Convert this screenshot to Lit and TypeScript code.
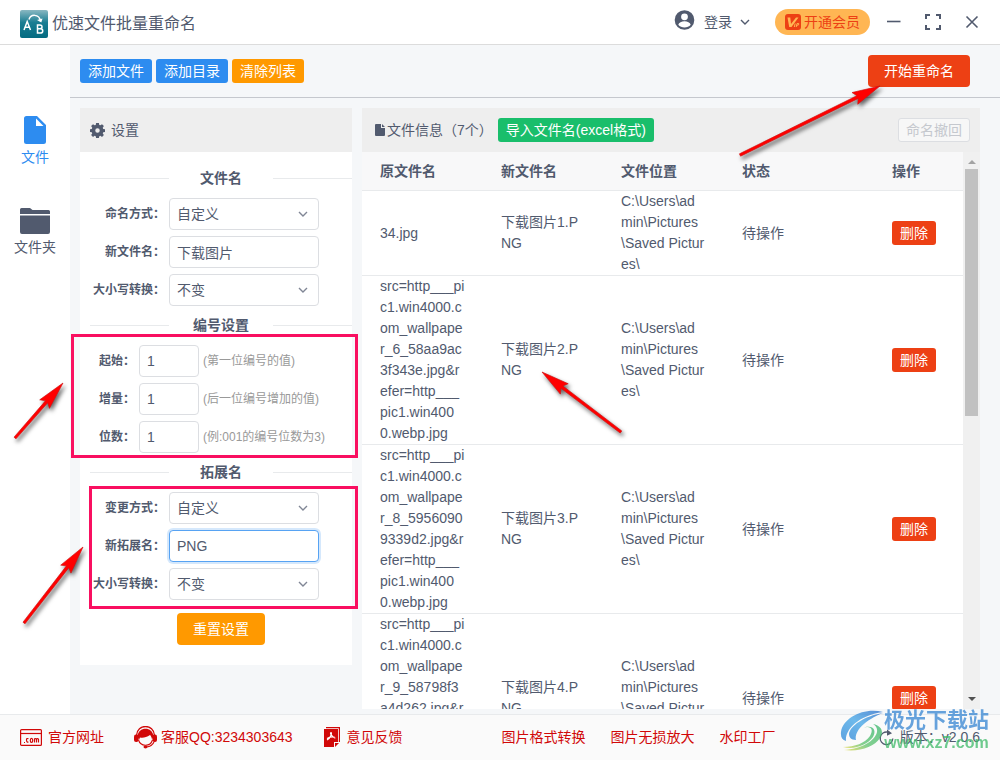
import { LitElement, html, css, svg } from "lit";
import { customElement, state } from "lit/decorators.js";

interface FileRow {
  source: string;
  target: string;
  folder: string;
  status: string;
}

const FOLDER = "C:\\Users\\admin\\Pictures\\Saved Pictures\\";

const chevron = html`<svg class="chevron" width="10" height="6" viewBox="0 0 10 6" aria-hidden="true">
  <path d="M1 1l4 4 4-4" fill="none" stroke="currentColor" stroke-width="1.4" />
</svg>`;

@customElement("app-root")
export class AppRoot extends LitElement {
  @state() private rows: FileRow[] = [
    { source: "34.jpg", target: "下载图片1.PNG", folder: FOLDER, status: "待操作" },
    {
      source: "src=http___pic1.win4000.com_wallpaper_6_58aa9ac3f343e.jpg&refer=http___pic1.win4000.webp.jpg",
      target: "下载图片2.PNG", folder: FOLDER, status: "待操作",
    },
    {
      source: "src=http___pic1.win4000.com_wallpaper_8_59560909339d2.jpg&refer=http___pic1.win4000.webp.jpg",
      target: "下载图片3.PNG", folder: FOLDER, status: "待操作",
    },
    {
      source: "src=http___pic1.win4000.com_wallpaper_9_58798f3a4d262.jpg&refer=http___pic1.win4000.webp.jpg",
      target: "下载图片4.PNG", folder: FOLDER, status: "待操作",
    },
  ];

  static styles = css`
    :host {
      display: flex;
      flex-direction: column;
      position: relative;
      height: 100vh;
      overflow: hidden;
      font: 14px/21px "Liberation Sans", "Noto Sans CJK SC", sans-serif;
      color: #515a6e;
      background: #f5f7f9;
    }
    * { box-sizing: border-box; }
    svg { display: block; flex: none; }
    button, input, select { font: inherit; color: inherit; margin: 0; }
    button { border: 0; padding: 0; background: none; white-space: nowrap; cursor: pointer; }
    a { color: inherit; text-decoration: none; }

    .titlebar {
      display: flex;
      align-items: center;
      flex: none;
      height: 45px;
      padding: 0 21px 0 20px;
      background: #fff;
      border-bottom: 1px solid #dcdcdc;
    }
    .brand { display: flex; align-items: center; gap: 4px; margin: 0 auto 0 0; padding-top: 3px; font-size: 16px; font-weight: 400; }
    .login { display: flex; align-items: center; gap: 8px; margin-right: 25px; }
    .login svg:first-child { margin-bottom: 4px; }
    .vip {
      display: flex;
      align-items: center;
      gap: 3px;
      height: 26px;
      margin-right: 17px;
      padding: 0 10px;
      border-radius: 13px;
      background: #ffb653;
      color: #ed4014;
    }
    .window { display: flex; align-items: center; gap: 24px; }

    .body { display: flex; flex: 1; min-height: 0; }
    .sidebar {
      display: flex;
      flex-direction: column;
      align-items: center;
      flex: none;
      gap: 40px;
      width: 70px;
      padding-top: 71px;
      background: #fff;
    }
    .nav { display: flex; flex-direction: column; align-items: center; gap: 3px; }
    .nav.active { color: #2d8cf0; }

    .main { display: flex; flex-direction: column; flex: 1; min-width: 0; }
    .toolbar {
      display: flex;
      align-items: center;
      flex: none;
      gap: 4px;
      height: 53px;
      padding: 0 30px 0 10px;
      border-bottom: 1px solid #c5c8ce;
    }
    .btn { height: 24px; padding: 0 8px; border-radius: 3px; color: #fff; line-height: 22px; }
    .large { height: 32px; padding: 0 16px; border-radius: 4px; }
    .blue { background: #2d8cf0; }
    .orange { background: #ff9900; }
    .red { background: #ed4014; }
    .green { background: #19be6b; }
    .end { margin-left: auto; }
    .undo { border: 1px solid #dcdee2; padding: 0 7px; background: #f7f7f7; color: #c5c8ce; line-height: 20px; }

    .content { display: flex; align-items: flex-start; flex: 1; gap: 10px; min-height: 0; padding: 10px 20px 5px 10px; }
    .panel { background: #fff; }
    .panel-head { display: flex; align-items: center; height: 44px; padding: 0 10px; background: #eee; }
    .panel-head h2 { margin: 0; font-size: 14px; font-weight: 400; }

    .settings { flex: none; width: 272px; }
    .settings .panel-head { gap: 6px; }
    .form { display: flex; flex-direction: column; gap: 6px; padding: 13px 0 0 10px; }
    .divider { display: flex; align-items: center; height: 27px; margin: 0; font-size: 14px; font-weight: 700; }
    .divider::before, .divider::after { content: ""; flex: 1; height: 1px; background: #e8eaec; }
    .divider span { width: 104px; text-align: center; }
    .field { display: flex; align-items: center; gap: 4px; height: 32px; }
    .field label { flex: none; width: 75px; text-align: right; font-size: 12px; font-weight: 700; white-space: nowrap; }
    .field.short label { width: 45px; }
    .control { position: relative; width: 150px; height: 32px; }
    .short .control { width: 60px; }
    .control input, .control select {
      display: block;
      width: 100%;
      height: 32px;
      padding: 0 7px;
      border: 1px solid #dcdee2;
      border-radius: 4px;
      background: #fff;
      outline: none;
      appearance: none;
    }
    .control .chevron { position: absolute; right: 11px; top: 13px; color: #808695; pointer-events: none; }
    .control .focused { border-color: #57a3f3; box-shadow: 0 0 0 2px rgba(45, 140, 240, 0.2); }
    .hint { font-size: 12px; color: #999; white-space: nowrap; }
    .reset { display: flex; justify-content: center; padding: 13px 0 20px 10px; }

    .list { display: flex; flex-direction: column; flex: 1; align-self: stretch; min-width: 0; }
    .list .panel-head { flex: none; gap: 2px; padding-left: 13px; }
    .list .green { margin-left: 3px; }
    .scroll { display: flex; flex: 1; min-height: 0; }
    .viewport { flex: 1; min-width: 0; overflow: hidden; }
    table { width: 100%; table-layout: fixed; border-spacing: 0; }
    th, td { padding: 0 18px; border-bottom: 1px solid #e8eaec; text-align: left; vertical-align: middle; word-break: break-all; }
    th { height: 39px; background: #f8f8f9; font-weight: 700; }
    td .btn { display: block; }
    .c1, .c3 { width: 121px; }
    .c2 { width: 120px; }
    .c4 { width: 150px; }
    .c5 { width: 89px; }
    .track { display: flex; flex-direction: column; align-items: center; flex: none; width: 17px; padding: 7px 0; background: #f0f0f0; }
    .thumb { width: 13px; height: 247px; margin: 5px 0 auto; background: #c1c1c1; }

    .footer {
      display: flex;
      align-items: center;
      flex: none;
      gap: 99px;
      height: 46px;
      padding: 0 20px;
      border-top: 1px solid #e8eaec;
      background: #fafafa;
      color: #d10808;
      white-space: nowrap;
    }
    .links { display: flex; gap: 25px; }
    .links.contact { gap: 30px; }
    .links a { display: flex; align-items: center; gap: 6px; }
    .links .service { gap: 4px; }
    .version { display: flex; align-items: center; gap: 6px; margin-left: auto; color: #515a6e; }

    .marks { position: absolute; inset: 0; width: 100%; height: 100%; pointer-events: none; }
    .watermark { position: absolute; right: 11px; bottom: 6px; display: flex; align-items: center; opacity: 0.75; pointer-events: none; }
    .watermark-text { display: flex; flex-direction: column; align-items: center; font-weight: 700; white-space: nowrap; }
    .site-name { font-size: 21px; line-height: 24px; color: #3585d2; }
    .site-url { font-size: 16px; line-height: 22px; color: #3fba69; }
  `;

  private selectField(id: string, label: string, value: string) {
    return html`<div class="field">
      <label for=${id}>${label}</label>
      <div class="control">
        <select id=${id}><option>${value}</option></select>
        ${chevron}
      </div>
    </div>`;
  }

  private textField(id: string, label: string, value: string, focused = false) {
    return html`<div class="field">
      <label for=${id}>${label}</label>
      <div class="control"><input id=${id} class=${focused ? "focused" : ""} .value=${value} /></div>
    </div>`;
  }

  private numberField(id: string, label: string, hint: string) {
    return html`<div class="field short">
      <label for=${id}>${label}</label>
      <div class="control"><input id=${id} .value=${"1"} /></div>
      <span class="hint">${hint}</span>
    </div>`;
  }

  private arrow(tailX: number, tailY: number, tipX: number, tipY: number) {
    const length = Math.hypot(tipX - tailX, tipY - tailY);
    const angle = (Math.atan2(tipY - tailY, tipX - tailX) * 180) / Math.PI;
    const d = `M0 0L-28 -6.5L-25 -1.5L${-length} -1.3V1.3L-25 1.5L-28 6.5Z`;
    return svg`<g filter="url(#soft)"><path transform="translate(${tipX} ${tipY}) rotate(${angle})" d=${d}
      fill="#ff0000" stroke="#d01010" stroke-width="0.6" stroke-linejoin="round" /></g>`;
  }

  render() {
    return html`
      <header class="titlebar">
        <h1 class="brand">
          <svg width="28" height="28" viewBox="0 0 28 28" aria-hidden="true">
            <defs><linearGradient id="logo" x1="0" y1="0" x2="0" y2="1">
              <stop offset="0" stop-color="#8ab8c2" /><stop offset=".45" stop-color="#197d92" /><stop offset="1" stop-color="#046b81" />
            </linearGradient></defs>
            <rect width="28" height="28" rx="2" fill="url(#logo)" />
            <g fill="none" stroke="#fff" stroke-width="1.5">
              <path d="M4 20l3.2-8.5L10.500 20M5 17.300h4.400" />
              <path d="M17.500 15v8h2.700c3.400 0 3.400-4.200 0-4.200h-2.700 2.400c2.800 0 2.800-3.800 0-3.800z" />
              <path d="M9 9.500c1.500-5.500 10-6 11.500 1.500" />
            </g>
            <path d="M17 10l5.500-1.500-1.200 4z" fill="#fff" />
          </svg>
          优速文件批量重命名
        </h1>
        <button class="login">
          <svg width="22" height="20" viewBox="0 0 22 20" aria-hidden="true">
            <circle cx="10.500" cy="10" r="9.800" fill="#515a6e" />
            <circle cx="10.500" cy="6.800" r="3.400" fill="#fff" />
            <path d="M4.300 14.800c1-4.700 11.400-4.700 12.400 0-2.800 3.600-9.600 3.600-12.400 0z" fill="#fff" />
          </svg>
          登录${chevron}
        </button>
        <button class="vip">
          <svg width="16" height="16" viewBox="0 0 16 16" aria-hidden="true">
            <rect width="16" height="16" rx="3" fill="#ed4014" />
            <path d="M2.500 3.500h2.800L6 10l5-6.500h2.500L6.500 13H4.200z" fill="#ffb653" />
            <path d="M9.300 13l.9-3.500M11.200 13l.9-3.500h1.600q.8 1.800-2 1.800" fill="none" stroke="#ffb653" />
          </svg>
          开通会员
        </button>
        <div class="window">
          <button aria-label="最小化"><svg width="14" height="14" viewBox="0 0 14 14"><path d="M0 6.500h13.500" stroke="#515a6e" stroke-width="1.600" /></svg></button>
          <button aria-label="最大化"><svg width="16" height="16" viewBox="0 0 16 16"><path d="M1 5V1h4M11 1h4v4M15 11v4h-4M5 15H1v-4" fill="none" stroke="#515a6e" stroke-width="2" /></svg></button>
          <button aria-label="关闭"><svg width="14" height="14" viewBox="0 0 14 14"><path d="M1.500 1.500l11 11M12.500 1.500l-11 11" stroke="#515a6e" stroke-width="1.600" /></svg></button>
        </div>
      </header>

      <div class="body">
        <nav class="sidebar">
          <button class="nav active">
            <svg width="22" height="28" viewBox="0 0 22 28" aria-hidden="true">
              <path d="M2.500 0H13l9 9v16.500a2.500 2.500 0 0 1-2.500 2.500h-17A2.500 2.500 0 0 1 0 25.500v-23A2.500 2.500 0 0 1 2.500 0z" fill="#2d8cf0" />
              <path d="M12 2.500V10h7.500z" fill="#fff" />
            </svg>
            文件
          </button>
          <button class="nav">
            <svg width="30" height="26" viewBox="0 0 30 26" aria-hidden="true" fill="#515a6e">
              <path d="M0 6V1.500Q0 0 1.500 0H10l2.500 2H28.500Q30 2 30 3.500V6zM0 7.500h30V24a2 2 0 0 1-2 2H2a2 2 0 0 1-2-2z" />
            </svg>
            文件夹
          </button>
        </nav>

        <main class="main">
          <div class="toolbar">
            <button class="btn blue">添加文件</button>
            <button class="btn blue">添加目录</button>
            <button class="btn orange">清除列表</button>
            <button class="btn large red end">开始重命名</button>
          </div>

          <div class="content">
            <section class="panel settings">
              <div class="panel-head">
                <svg width="15" height="15" viewBox="0 0 16 16" aria-hidden="true">
                  <path fill="#515a6e" fill-rule="evenodd" d="M6.500 0h3l.4 2 1.200.5L12.800 1.300l2 2-1.200 1.800.5 1.200 1.900.3v2.900l-1.900.4-.5 1.200 1.200 1.700-2 2-1.700-1.100-1.200.5-.4 1.800h-3l-.4-1.800-1.200-.5-1.700 1.100-2-2 1.200-1.700-.5-1.200L0 9.500V6.600l1.900-.3.500-1.200L1.200 3.300l2-2 1.700 1.200L6.100 2zM8 5.600a2.400 2.400 0 1 0 0 4.800 2.400 2.400 0 0 0 0-4.800z" />
                </svg>
                <h2>设置</h2>
              </div>
              <div class="form">
                <h3 class="divider"><span>文件名</span></h3>
                ${this.selectField("name-mode", "命名方式：", "自定义")}
                ${this.textField("new-name", "新文件名：", "下载图片")}
                ${this.selectField("name-case", "大小写转换：", "不变")}
                <h3 class="divider"><span>编号设置</span></h3>
                ${this.numberField("start", "起始：", "(第一位编号的值)")}
                ${this.numberField("step", "增量：", "(后一位编号增加的值)")}
                ${this.numberField("digits", "位数：", "(例:001的编号位数为3)")}
                <h3 class="divider"><span>拓展名</span></h3>
                ${this.selectField("ext-mode", "变更方式：", "自定义")}
                ${this.textField("new-ext", "新拓展名：", "PNG", true)}
                ${this.selectField("ext-case", "大小写转换：", "不变")}
              </div>
              <div class="reset"><button class="btn large orange">重置设置</button></div>
            </section>

            <section class="list">
              <div class="panel-head">
                <svg width="10" height="12" viewBox="0 0 10 12" aria-hidden="true">
                  <path d="M1 0h5v4h4v7a1 1 0 0 1-1 1H1a1 1 0 0 1-1-1V1a1 1 0 0 1 1-1zM7 0l3 3H7z" fill="#515a6e" />
                </svg>
                <h2>文件信息（7个）</h2>
                <button class="btn green">导入文件名(excel格式)</button>
                <button class="btn undo end" disabled>命名撤回</button>
              </div>
              <div class="scroll panel">
                <div class="viewport">
                  <table>
                    <thead>
                      <tr>
                        <th class="c1">原文件名</th>
                        <th class="c2">新文件名</th>
                        <th class="c3">文件位置</th>
                        <th class="c4">状态</th>
                        <th class="c5">操作</th>
                      </tr>
                    </thead>
                    <tbody>
                      ${this.rows.map((row) => html`<tr>
                        <td>${row.source}</td>
                        <td>${row.target}</td>
                        <td>${row.folder}</td>
                        <td>${row.status}</td>
                        <td><button class="btn red">删除</button></td>
                      </tr>`)}
                    </tbody>
                  </table>
                </div>
                <div class="track">
                  <svg width="8" height="5" viewBox="0 0 8 5"><path d="M0 5l4-4 4 4z" fill="#a3a3a3" /></svg>
                  <div class="thumb"></div>
                  <svg width="8" height="5" viewBox="0 0 8 5"><path d="M0 0l4 4 4-4z" fill="#505050" /></svg>
                </div>
              </div>
            </section>
          </div>
        </main>
      </div>

      <footer class="footer">
        <div class="links contact">
          <a href="#site">
            <svg width="22" height="17" viewBox="0 0 22 17" aria-hidden="true" fill="none" stroke="#d10808" stroke-width="1.200">
              <rect x=".6" y=".6" width="20.800" height="15.800" rx="1" />
              <path d="M1 4.500h20" />
              <path d="M4 13.500h1M8.500 9.800q-2-1-2 1.300t2 1.900M10.300 11.400q0-2 1.200-2t1.200 2-1.200 2-1.200-2M14.500 13.500V9.300M14.500 10.500q1.300-2 2 0v3M16.500 10.500q1.300-2 2 0v3" />
            </svg>
            官方网址
          </a>
          <a class="service" href="#service">
            <svg width="23" height="23" viewBox="0 0 23 23" aria-hidden="true">
              <path d="M2.500 9.500C3-2.500 20-2.500 20.500 9.500" fill="none" stroke="#d10808" stroke-width="1.300" />
              <path d="M3.500 10.500C4 0 19 0 19.500 10.500l-1.500 3c-.3-2-1-3.500-2-4.500-3.500 2.500-7 3-10 2.500L5 14z" fill="#d10808" />
              <rect y="8.500" width="4.500" height="7.500" rx="2" fill="#d10808" />
              <rect x="18.500" y="8.500" width="4.500" height="7.500" rx="2" fill="#d10808" />
              <path d="M4.500 14c2 6.500 11.500 7.500 14 0M20 16q-2 4.500-7.500 5" fill="none" stroke="#d10808" stroke-width="1.100" />
              <ellipse cx="11.500" cy="21" rx="2" ry="1.400" fill="#d10808" />
            </svg>
            客服QQ:3234303643
          </a>
          <a href="#feedback">
            <svg width="18" height="21" viewBox="0 0 18 21" aria-hidden="true">
              <path d="M3 .6h13.400V15" fill="none" stroke="#d10808" stroke-width="1.200" />
              <path d="M1 2h14v13h-4v5H1zM12 16h4l-4 4z" fill="#d10808" />
              <path d="M8 5.500c-1.500 0 .7 4.500 4.300 5.800M8 5.500c1.300 0-.5 6-4 7.500M4 11.500c2-1.300 5-1.700 7.500-1.500" fill="none" stroke="#fff" stroke-width="1.200" />
            </svg>
            意见反馈
          </a>
        </div>
        <div class="links">
          <a href="#convert">图片格式转换</a>
          <a href="#enlarge">图片无损放大</a>
          <a href="#watermark">水印工厂</a>
        </div>
        <div class="version">
          <svg width="15" height="17" viewBox="0 0 15 17" aria-hidden="true">
            <path d="M9 3.200A6.300 6.300 0 1 0 13.800 9.500" fill="none" stroke="#515a6e" stroke-width="1.300" />
            <path d="M8 .5l5 3.700-5 2.500z" fill="#515a6e" />
          </svg>
          <span>版本：v2.0.6</span>
        </div>
      </footer>

      <svg class="marks" aria-hidden="true">
        <defs>
          <filter id="soft" x="-20%" y="-20%" width="150%" height="150%" color-interpolation-filters="sRGB">
            <feDropShadow dx="2" dy="3" stdDeviation="2" flood-color="#000" flood-opacity="0.6" />
          </filter>
        </defs>
        <g fill="none" stroke="#f90f60" stroke-width="3">
          <rect x="72.500" y="335.500" width="284" height="121" />
          <rect x="90.500" y="487.500" width="266" height="120" />
        </g>
        ${this.arrow(740, 155, 880, 86)}
        ${this.arrow(621, 432, 542, 372)}
        ${this.arrow(15, 438, 63, 383)}
        ${this.arrow(24, 623, 83, 547)}
      </svg>

      <div class="watermark">
        <svg width="44" height="42" viewBox="0 0 44 42" aria-hidden="true">
          <defs>
            <linearGradient id="swirl-blue" x1="1" y1="0" x2="0" y2="1">
              <stop offset="0" stop-color="#2468c8" /><stop offset=".5" stop-color="#3fa4e6" /><stop offset="1" stop-color="#2a86d8" />
            </linearGradient>
            <linearGradient id="swirl-green" x1="1" y1="0" x2="0" y2="1">
              <stop offset="0" stop-color="#35b56a" /><stop offset=".6" stop-color="#5cc26c" /><stop offset="1" stop-color="#e6d84a" />
            </linearGradient>
          </defs>
          <path d="M43 2C25-3 3 7 1 22c-.5 5 1 8 5 9C5 20 17 6 43 2z" fill="url(#swirl-blue)" />
          <path d="M43 3C24 6 10 16 9 24c0 3 2 6 7 6-2-9 9-20 27-27z" fill="url(#swirl-blue)" />
          <path d="M22 18c9-3 12 1 8 8-5 7-15 11-27 11 12 3 24-2 30-10 4-7 0-13-11-9z" fill="url(#swirl-green)" />
          <path d="M33 14c9 2 11 8 7 14-6 9-20 14-36 12 17-1 31-9 33-18 .5-4-1-6-4-8z" fill="url(#swirl-green)" />
        </svg>
        <div class="watermark-text">
          <span class="site-name">极光下载站</span>
          <span class="site-url">www.xz7.com</span>
        </div>
      </div>
    `;
  }
}
